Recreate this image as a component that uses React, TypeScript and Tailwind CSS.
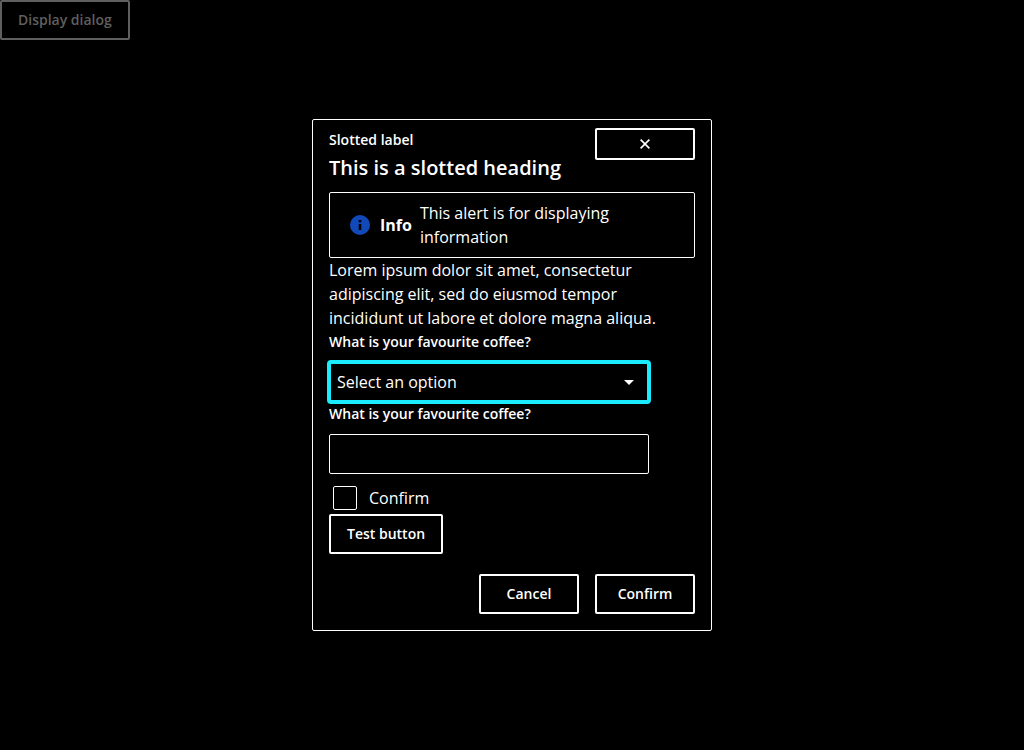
import type { ButtonHTMLAttributes } from "react";

const buttonBase =
  "h-10 rounded-xs border-2 border-white bg-black px-4 text-sm font-semibold text-white";

function Button({ className = "", ...props }: ButtonHTMLAttributes<HTMLButtonElement>) {
  return <button type="button" className={`${buttonBase} ${className}`} {...props} />;
}

function InfoIcon() {
  return (
    <svg viewBox="0 0 20 20" className="size-5 shrink-0" aria-hidden="true">
      <circle cx="10" cy="10" r="10" fill="#1149b9" />
      <path d="M8.7 5h2.6v2.2H8.7zM8.7 9h2.6v6H8.7z" fill="#000" />
    </svg>
  );
}

function CloseIcon() {
  return (
    <svg viewBox="0 0 10 10" className="size-[10px]" aria-hidden="true">
      <path d="M.6.6l8.8 8.8M9.4.6L.6 9.4" fill="none" stroke="currentColor" strokeWidth="1.6" />
    </svg>
  );
}

export default function App() {
  return (
    <div className="min-h-screen bg-black font-['Open_Sans',sans-serif] text-base text-white antialiased">
      <button
        type="button"
        className="block h-10 rounded-xs border-2 border-[#5f5f5f] bg-black px-4 text-sm font-semibold text-[#5f5f5f]"
      >
        Display dialog
      </button>

      <div className="fixed inset-0 flex items-center justify-center">
        <div
          role="dialog"
          aria-modal="true"
          aria-labelledby="dialog-heading"
          className="w-full max-w-[400px] rounded-xs border border-white bg-black px-4 pt-2 pb-4"
        >
          <header className="flex items-start justify-between pb-2">
            <div>
              <p className="text-sm/6 font-semibold">Slotted label</p>
              <h2 id="dialog-heading" className="text-xl/8 font-semibold">
                This is a slotted heading
              </h2>
            </div>
            <button
              type="button"
              aria-label="Close"
              className="flex h-8 w-[100px] items-center justify-center rounded-xs border-2 border-white bg-black"
            >
              <CloseIcon />
            </button>
          </header>

          <div role="status" className="flex items-center gap-2 rounded-xs border border-white px-5 py-2">
            <span className="pr-0.5">
              <InfoIcon />
            </span>
            <strong className="font-bold">Info</strong>
            <p>This alert is for displaying information</p>
          </div>

          <p>
            Lorem ipsum dolor sit amet, consectetur adipiscing elit, sed do eiusmod tempor
            incididunt ut labore et dolore magna aliqua.
          </p>

          <div className="flex max-w-80 flex-col gap-2">
            <label htmlFor="coffee-select" className="text-sm/6 font-semibold">
              What is your favourite coffee?
            </label>
            <div className="grid items-center">
              <select
                id="coffee-select"
                defaultValue=""
                className="col-start-1 row-start-1 h-10 w-full appearance-none rounded-xs border border-white bg-black px-[7px] text-base outline-4 -outline-offset-2 outline-[#1aebff]"
              >
                <option value="">Select an option</option>
              </select>
              <svg
                viewBox="0 0 10 5"
                className="pointer-events-none col-start-1 row-start-1 mr-[15px] h-[5px] w-[10px] justify-self-end"
                aria-hidden="true"
              >
                <path d="M0 0h10L5 5z" fill="#fff" />
              </svg>
            </div>
          </div>

          <div className="flex max-w-80 flex-col gap-2">
            <label htmlFor="coffee-text" className="text-sm/6 font-semibold">
              What is your favourite coffee?
            </label>
            <input
              id="coffee-text"
              type="text"
              className="h-10 w-full rounded-xs border border-white bg-black px-2"
            />
          </div>

          <div className="flex items-center gap-3 px-1 pt-3 pb-1">
            <input
              id="confirm"
              type="checkbox"
              className="size-6 appearance-none rounded-xs border border-white bg-black checked:bg-white"
            />
            <label htmlFor="confirm">Confirm</label>
          </div>

          <Button className="block">Test button</Button>

          <footer className="flex justify-end gap-4 pt-5">
            <Button className="w-[100px]">Cancel</Button>
            <Button className="w-[100px]">Confirm</Button>
          </footer>
        </div>
      </div>
    </div>
  );
}
